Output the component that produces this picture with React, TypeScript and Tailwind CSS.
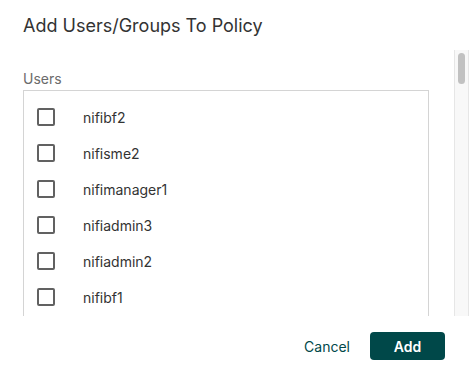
const users = ["nifibf2", "nifisme2", "nifimanager1", "nifiadmin3", "nifiadmin2", "nifibf1"];

export default function App() {
  return (
    <div className="w-[469px] h-[375px] bg-white overflow-hidden font-['Inter',sans-serif] text-[#333333]">
      {/* Title */}
      <div className="h-[50px] pl-[23px] pt-[14px]">
        <h1 className="text-[18px] leading-[24px] font-normal text-[#333333]">Add Users/Groups To Policy</h1>
      </div>

      {/* Scroll area */}
      <div className="flex h-[266px]">
        <div className="flex-1 min-w-0 overflow-hidden pl-[23px] pr-[25px] pt-[20px]">
          <div className="text-[14px] leading-[18px] text-[#6b6b6b] mb-[2px]">Users</div>
          <div className="h-[246px] border border-b-0 border-[#d4d4d4] pt-[8px]">
            {users.map((u) => (
              <label key={u} className="flex items-center h-[36px] pl-[13px] cursor-pointer">
                <span className="w-[18px] h-[18px] border-2 border-[#616161] rounded-[2px] shrink-0" />
                <span className="ml-[28px] text-[14px] text-[#333333]">{u}</span>
              </label>
            ))}
          </div>
        </div>
        <div className="w-[15px] shrink-0 bg-[#f8f8f8] border-l border-r border-[#e6e6e6] pt-[3px] flex justify-center">
          <div className="w-[7px] h-[31px] rounded-full bg-[#c1c1c1]" />
        </div>
      </div>

      {/* Footer */}
      <div className="flex justify-end items-center pr-[24px] pt-[16px] gap-[20px]">
        <button className="text-[14px] font-normal text-[#004849] px-0">Cancel</button>
        <button className="w-[75px] h-[28px] rounded-[4px] bg-[#004849] text-white text-[14px] font-semibold">Add</button>
      </div>
    </div>
  );
}
